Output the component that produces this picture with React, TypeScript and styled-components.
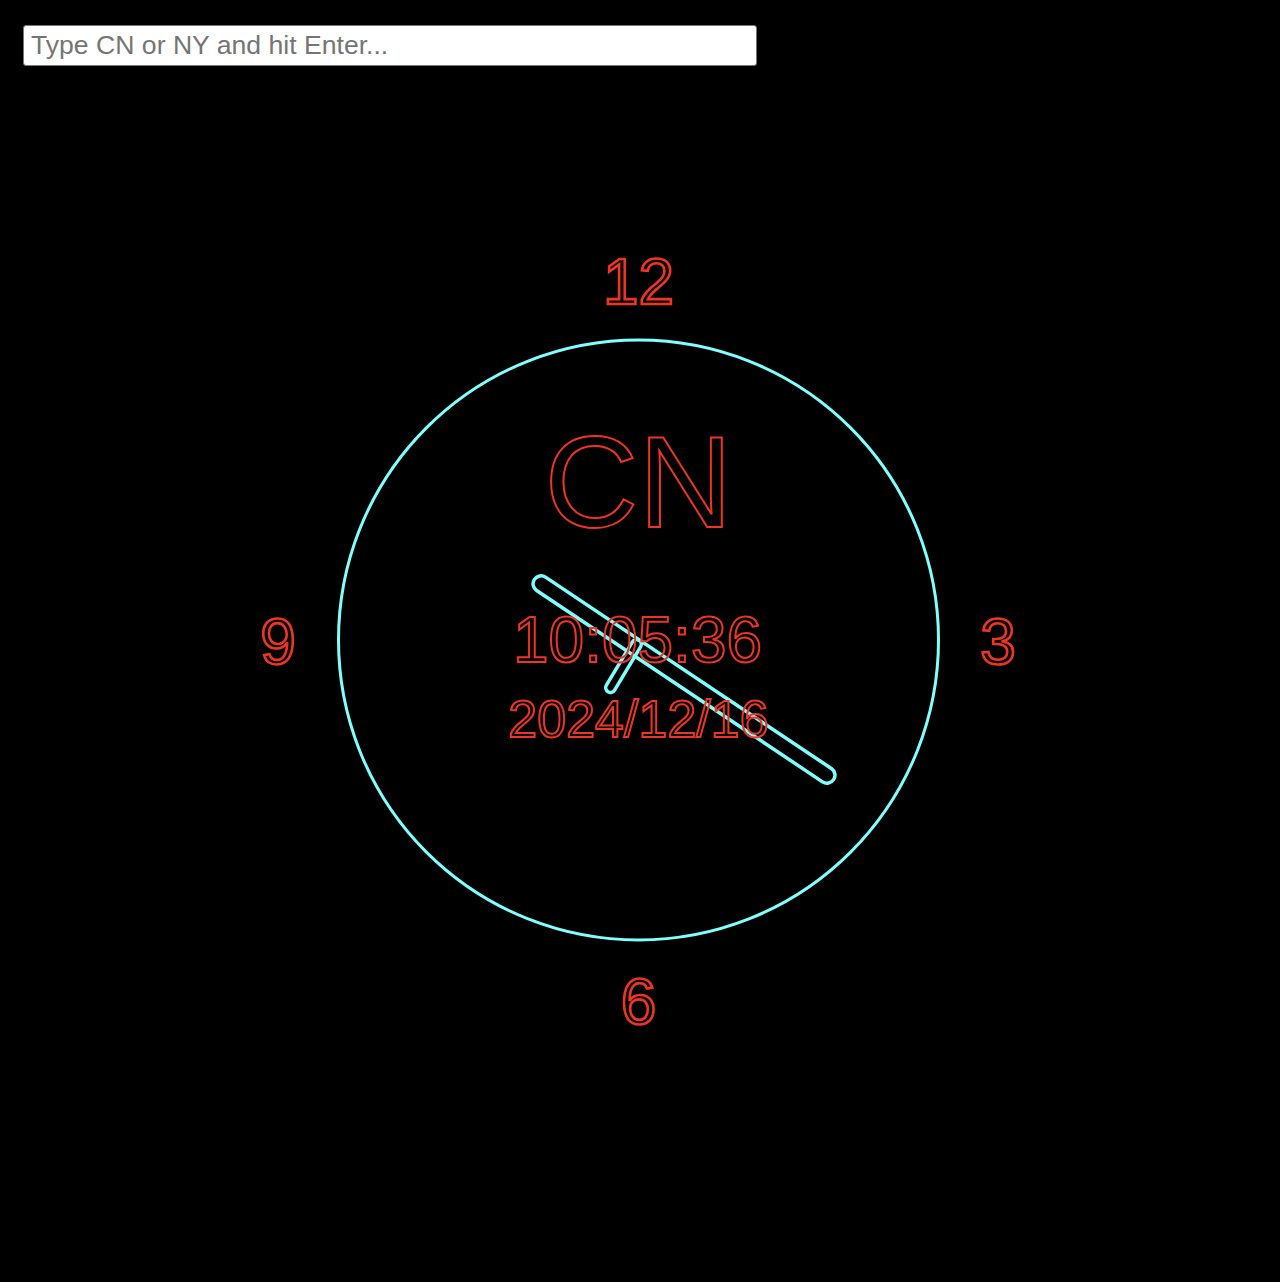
import React from "react";
import styled, { createGlobalStyle } from "styled-components";

const GlobalStyle = createGlobalStyle`
  html, body {
    margin: 0;
    padding: 0;
    background: #000;
  }
  body {
    font-family: "Liberation Sans", Arial, sans-serif;
  }
`;

const RED = "#ee3524";
const CYAN = "#80ffff";

const Stage = styled.main`
  position: relative;
  width: 100%;
  min-height: 100vh;
  background: #000;
  overflow: hidden;
`;

const SearchInput = styled.input`
  position: absolute;
  top: 25px;
  left: 23px;
  width: 734px;
  height: 41px;
  box-sizing: border-box;
  padding: 0 7px;
  border: 1px solid #767676;
  border-radius: 3px;
  background: #fff;
  font-family: "Liberation Sans", Arial, sans-serif;
  font-size: 26.6px;
  color: #000;
  outline: none;
  &::placeholder {
    color: #757575;
  }
`;

const ClockFace = styled.svg`
  display: block;
  width: 1280px;
  height: 1282px;
`;

const Rim = styled.circle`
  fill: none;
  stroke: ${CYAN};
  stroke-width: 3;
`;

const Hand = styled.rect`
  fill: none;
  stroke: ${CYAN};
  stroke-width: 3.5;
`;

const OutlineText = styled.text<{ $size: number; $weight?: number }>`
  font-family: "Liberation Sans", Arial, sans-serif;
  font-size: ${(p) => p.$size}px;
  fill: none;
  stroke: ${RED};
  stroke-width: ${(p) => p.$weight ?? 2};
  text-anchor: middle;
`;

const CX = 638.5;
const CY = 640;

const numerals = [
  { label: "12", x: CX, y: 304 },
  { label: "3", x: 998, y: 664 },
  { label: "6", x: CX, y: 1024 },
  { label: "9", x: 278, y: 664 },
];

export default function App() {
  return (
    <>
      <GlobalStyle />
      <Stage>
        <ClockFace viewBox="0 0 1280 1282">
          <Rim cx={CX} cy={CY} r={300} />
          <Hand
            x={684 - 180}
            y={679.5 - 8}
            width={360}
            height={16}
            rx={8}
            transform="rotate(33.8 684 679.5)"
          />
          <Hand
            x={623.5 - 30}
            y={666 - 4.75}
            width={60}
            height={9.5}
            rx={4.75}
            transform="rotate(-59 623.5 666)"
          />
          {numerals.map((n) => (
            <OutlineText key={n.label} $size={64} $weight={2.6} x={n.x} y={n.y}>
              {n.label}
            </OutlineText>
          ))}
          <OutlineText $size={130} x={CX} y={527}>
            CN
          </OutlineText>
          <OutlineText $size={64} x={CX - 1} y={662}>
            10:05:36
          </OutlineText>
          <OutlineText $size={52} x={CX} y={737}>
            2024/12/16
          </OutlineText>
        </ClockFace>
        <SearchInput type="text" placeholder="Type CN or NY and hit Enter..." />
      </Stage>
    </>
  );
}
